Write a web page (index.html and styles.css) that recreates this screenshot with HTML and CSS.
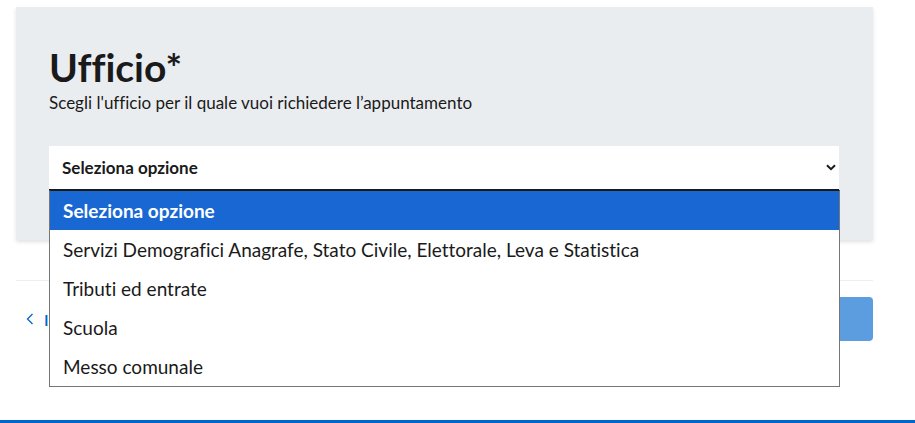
FILE: index.html
```html
<!DOCTYPE html>
<html lang="it">
<head>
<meta charset="utf-8">
<title>Ufficio</title>
<link rel="stylesheet" href="styles.css">
</head>
<body>
<div class="page">
  <section class="card">
    <h2 class="title">Ufficio*</h2>
    <p class="subtitle">Scegli l'ufficio per il quale vuoi richiedere l’appuntamento</p>
    <div class="select-wrap">
      <div class="select">
        <span class="select-value">Seleziona opzione</span>
        <svg class="select-arrow" width="10" height="7" viewBox="0 0 10 7"><path d="M1 1.2 L5 5.2 L9 1.2" fill="none" stroke="#1a1a1a" stroke-width="2"/></svg>
      </div>
      <ul class="dropdown">
        <li class="option option-active">Seleziona opzione</li>
        <li class="option">Servizi Demografici Anagrafe, Stato Civile, Elettorale, Leva e Statistica</li>
        <li class="option">Tributi ed entrate</li>
        <li class="option">Scuola</li>
        <li class="option">Messo comunale</li>
      </ul>
    </div>
  </section>
  <hr class="sep">
  <nav class="steps-nav">
    <a class="back" href="#">
      <svg class="back-icon" width="8" height="12" viewBox="0 0 8 12"><path d="M6.5 1 L1.5 6 L6.5 11" fill="none" stroke="#0066cc" stroke-width="1.3"/></svg>
      <span>Indietro</span>
    </a>
    <button class="next" type="button">Avanti</button>
  </nav>
</div>
<footer class="footer"></footer>
</body>
</html>
```

FILE: styles.css
```css
* { box-sizing: border-box; }
html, body { margin: 0; padding: 0; }
body {
  background: #ffffff;
  font-family: Lato, "Open Sans", sans-serif;
  font-variant-ligatures: none;
  color: #1a1a1a;
  width: 915px;
  height: 423px;
  overflow: hidden;
  position: relative;
}
.page {
  padding: 7px 42px 0 16px;
}
.card {
  background: #eaedf0;
  height: 233px;
  padding: 38px 34px 0 33px;
  box-shadow: 0 2px 4px rgba(0,0,0,0.12);
}
.title {
  margin: 0;
  font-size: 39px;
  line-height: 44px;
  font-weight: 700;
  color: #1a1a1a;
}
.subtitle {
  margin: 4px 0 0;
  font-size: 17px;
  line-height: 20px;
  color: #1a1a1a;
}
.select-wrap {
  position: relative;
  margin-top: 33px;
}
.select {
  height: 44px;
  background: #fff;
  display: flex;
  align-items: center;
  justify-content: space-between;
  padding: 0 3px 0 13px;
  border-bottom: 1px solid #1a1a1a;
}
.select-value {
  font-size: 17px;
  font-weight: 700;
}
.select-arrow { display: block; }
.dropdown {
  position: absolute;
  left: 0;
  right: -1px;
  top: 44px;
  margin: 0;
  padding: 0;
  list-style: none;
  background: #fff;
  border: 1px solid #767676;
  border-top: 1px solid #1a1a1a;
  z-index: 5;
}
.option {
  height: 39px;
  display: flex;
  align-items: center;
  padding-left: 13px;
  font-size: 19px;
  color: #1a1a1a;
  white-space: nowrap;
}
.option-active {
  background: #1967d2;
  color: #fff;
  font-weight: 700;
}
.sep {
  margin: 40px 0 0;
  border: 0;
  border-top: 1px solid #eeeeee;
}
.steps-nav {
  display: flex;
  justify-content: space-between;
  align-items: center;
  margin-top: 16px;
}
.back {
  display: flex;
  align-items: center;
  gap: 10px;
  padding-left: 10px;
  color: #0066cc;
  text-decoration: none;
  font-size: 16px;
  font-weight: 600;
}
.back-icon { display: block; }
.next {
  height: 44px;
  width: 140px;
  border: 0;
  border-radius: 4px;
  background: #5c9de0;
  color: #fff;
  font-family: inherit;
  font-size: 16px;
  font-weight: 700;
}
.footer {
  position: absolute;
  left: 0;
  right: 0;
  top: 420px;
  height: 3px;
  background: #0066cc;
}
```
